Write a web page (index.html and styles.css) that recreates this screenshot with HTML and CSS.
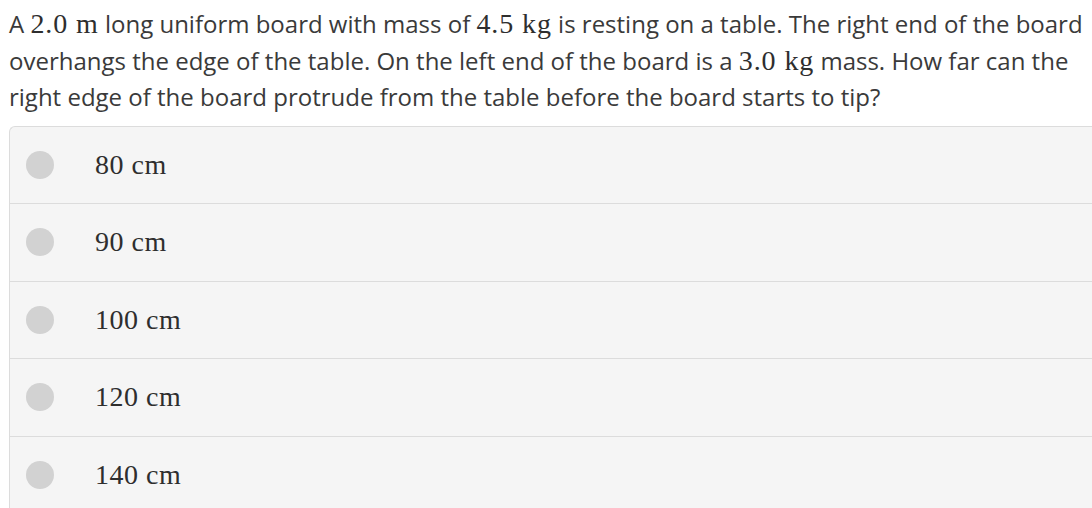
FILE: index.html
```
<!DOCTYPE html>
<html>
<head>
<meta charset="utf-8">
<link rel="stylesheet" href="styles.css">
</head>
<body>
<div class="page">
  <p class="question">A <span class="math">2.0&nbsp;m</span> long uniform board with mass of <span class="math">4.5&nbsp;kg</span> is resting on a table. The right end of the board overhangs the edge of the table. On the left end of the board is a <span class="math">3.0&nbsp;kg</span> mass. How far can the right edge of the board protrude from the table before the board starts to tip?</p>
  <div class="options">
    <div class="option"><span class="radio"></span><span class="label">80&nbsp;cm</span></div>
    <div class="option"><span class="radio"></span><span class="label">90&nbsp;cm</span></div>
    <div class="option"><span class="radio"></span><span class="label">100&nbsp;cm</span></div>
    <div class="option"><span class="radio"></span><span class="label">120&nbsp;cm</span></div>
    <div class="option"><span class="radio"></span><span class="label">140&nbsp;cm</span></div>
  </div>
</div>
</body>
</html>
```
FILE: styles.css
```
html, body {
  margin: 0;
  padding: 0;
  background: #ffffff;
  overflow: hidden;
}
.page {
  padding: 6px 0 0 9px;
  width: 1110px;
}
.question {
  margin: 0 0 10px 0;
  font-family: "Open Sans", sans-serif;
  font-size: 24px;
  line-height: 36.5px;
  color: #3a3a3a;
  width: 1083px;
}
.math {
  font-family: "Liberation Serif", serif;
  font-size: 28px;
  letter-spacing: 0.9px;
  color: #2e2e2e;
  line-height: 1;
}
.options {
  border: 1px solid #dcdcdc;
  border-right: none;
  border-top-left-radius: 6px;
  background: #f5f5f5;
}
.option {
  display: flex;
  align-items: center;
  height: 77.5px;
  box-sizing: border-box;
  border-bottom: 1px solid #dcdcdc;
  padding-left: 16px;
}
.radio {
  width: 28px;
  height: 28px;
  border-radius: 50%;
  background: #d2d2d2;
  flex: none;
}
.label {
  margin-left: 41px;
  font-family: "Liberation Serif", serif;
  font-size: 28px;
  letter-spacing: 0.5px;
  color: #2e2e2e;
}
```
